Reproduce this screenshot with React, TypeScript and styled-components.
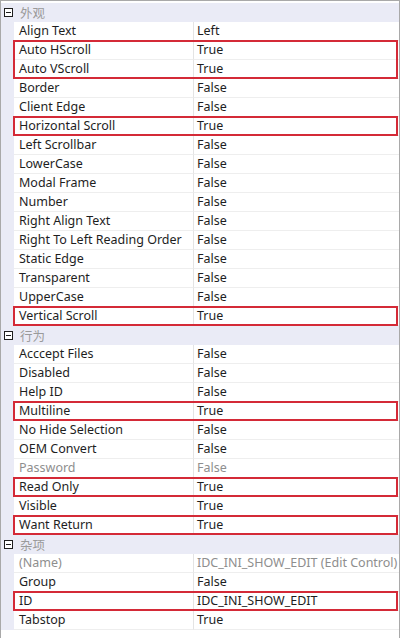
import React from "react";
import styled, { createGlobalStyle } from "styled-components";

const Global = createGlobalStyle`
  html, body { margin: 0; padding: 0; background: #ffffff; }
  body { font-family: "Noto Sans", "Noto Sans CJK SC", sans-serif; }
`;

const Grid = styled.div`
  width: 400px;
  height: 638px;
  box-sizing: border-box;
  border-left: 1px solid #a9a9a9;
  border-right: 1px solid #a9a9a9;
  border-top: 1px solid #a9a9a9;
  padding-top: 2px;
  background: #ffffff;
  overflow: hidden;
  font-size: 12.5px;
  color: #1e1e1e;
`;

const HeaderRow = styled.div`
  display: flex;
  align-items: center;
  height: 19px;
  background: #eaebf6;
`;

const Toggle = styled.div`
  width: 13px;
  display: flex;
  justify-content: center;
  align-items: center;
  padding-left: 1px;
`;

const HeaderLabel = styled.span`
  padding-left: 5px;
  color: #9a9a9a;
  font-family: "Noto Sans CJK SC", sans-serif;
  font-size: 12.5px;
  line-height: 19px;
`;

const Row = styled.div`
  display: flex;
  height: 19px;
`;

const Gutter = styled.div`
  width: 13px;
  flex: none;
  background: #eaebf6;
`;

const Cell = styled.div<{ $name?: boolean; $dim?: boolean }>`
  box-sizing: border-box;
  height: 19px;
  line-height: 18px;
  border-bottom: 1px solid #eeeeee;
  ${(p) => (p.$name ? "width: 180px; border-right: 1px solid #e4e4e4; padding-left: 5px;" : "flex: 1; padding-left: 3px;")}
  color: ${(p) => (p.$dim ? "#8e8e8e" : "#1e1e1e")};
  white-space: nowrap;
  overflow: hidden;
`;

const Highlight = styled.div`
  position: relative;
  &::after {
    content: "";
    position: absolute;
    left: 12px;
    right: 1px;
    top: -1px;
    bottom: 0;
    border: 2px solid #d42a37;
    pointer-events: none;
  }
`;

type Prop = { n: string; v: string; dim?: boolean; hl?: number };

const MinusBox = () => (
  <svg width="9" height="9" viewBox="0 0 9 9">
    <rect x="0.5" y="0.5" width="8" height="8" fill="#ffffff" stroke="#1e1e1e" />
    <line x1="2" y1="4.5" x2="7" y2="4.5" stroke="#1e1e1e" />
  </svg>
);

const PropRow = ({ p }: { p: Prop }) => (
  <Row>
    <Gutter />
    <Cell $name $dim={p.dim}>{p.n}</Cell>
    <Cell $dim={p.dim}>{p.v}</Cell>
  </Row>
);

const categories: { title: string; items: Prop[] }[] = [
  {
    title: "外观",
    items: [
      { n: "Align Text", v: "Left" },
      { n: "Auto HScroll", v: "True", hl: 2 },
      { n: "Auto VScroll", v: "True", hl: 0 },
      { n: "Border", v: "False" },
      { n: "Client Edge", v: "False" },
      { n: "Horizontal Scroll", v: "True", hl: 1 },
      { n: "Left Scrollbar", v: "False" },
      { n: "LowerCase", v: "False" },
      { n: "Modal Frame", v: "False" },
      { n: "Number", v: "False" },
      { n: "Right Align Text", v: "False" },
      { n: "Right To Left Reading Order", v: "False" },
      { n: "Static Edge", v: "False" },
      { n: "Transparent", v: "False" },
      { n: "UpperCase", v: "False" },
      { n: "Vertical Scroll", v: "True", hl: 1 },
    ],
  },
  {
    title: "行为",
    items: [
      { n: "Acccept Files", v: "False" },
      { n: "Disabled", v: "False" },
      { n: "Help ID", v: "False" },
      { n: "Multiline", v: "True", hl: 1 },
      { n: "No Hide Selection", v: "False" },
      { n: "OEM Convert", v: "False" },
      { n: "Password", v: "False", dim: true },
      { n: "Read Only", v: "True", hl: 1 },
      { n: "Visible", v: "True" },
      { n: "Want Return", v: "True", hl: 1 },
    ],
  },
  {
    title: "杂项",
    items: [
      { n: "(Name)", v: "IDC_INI_SHOW_EDIT (Edit Control)", dim: true },
      { n: "Group", v: "False" },
      { n: "ID", v: "IDC_INI_SHOW_EDIT", hl: 1 },
      { n: "Tabstop", v: "True" },
    ],
  },
];

const renderItems = (items: Prop[]) => {
  const out: React.ReactNode[] = [];
  let i = 0;
  while (i < items.length) {
    const it = items[i];
    if (it.hl && it.hl > 0) {
      const group = items.slice(i, i + it.hl);
      out.push(
        <Highlight key={it.n}>
          {group.map((g) => (
            <PropRow key={g.n} p={g} />
          ))}
        </Highlight>
      );
      i += it.hl;
    } else {
      out.push(<PropRow key={it.n} p={it} />);
      i += 1;
    }
  }
  return out;
};

export default function App() {
  return (
    <>
      <Global />
      <Grid>
        {categories.map((c) => (
          <div key={c.title}>
            <HeaderRow>
              <Toggle>
                <MinusBox />
              </Toggle>
              <HeaderLabel>{c.title}</HeaderLabel>
            </HeaderRow>
            {renderItems(c.items)}
          </div>
        ))}
      </Grid>
    </>
  );
}
